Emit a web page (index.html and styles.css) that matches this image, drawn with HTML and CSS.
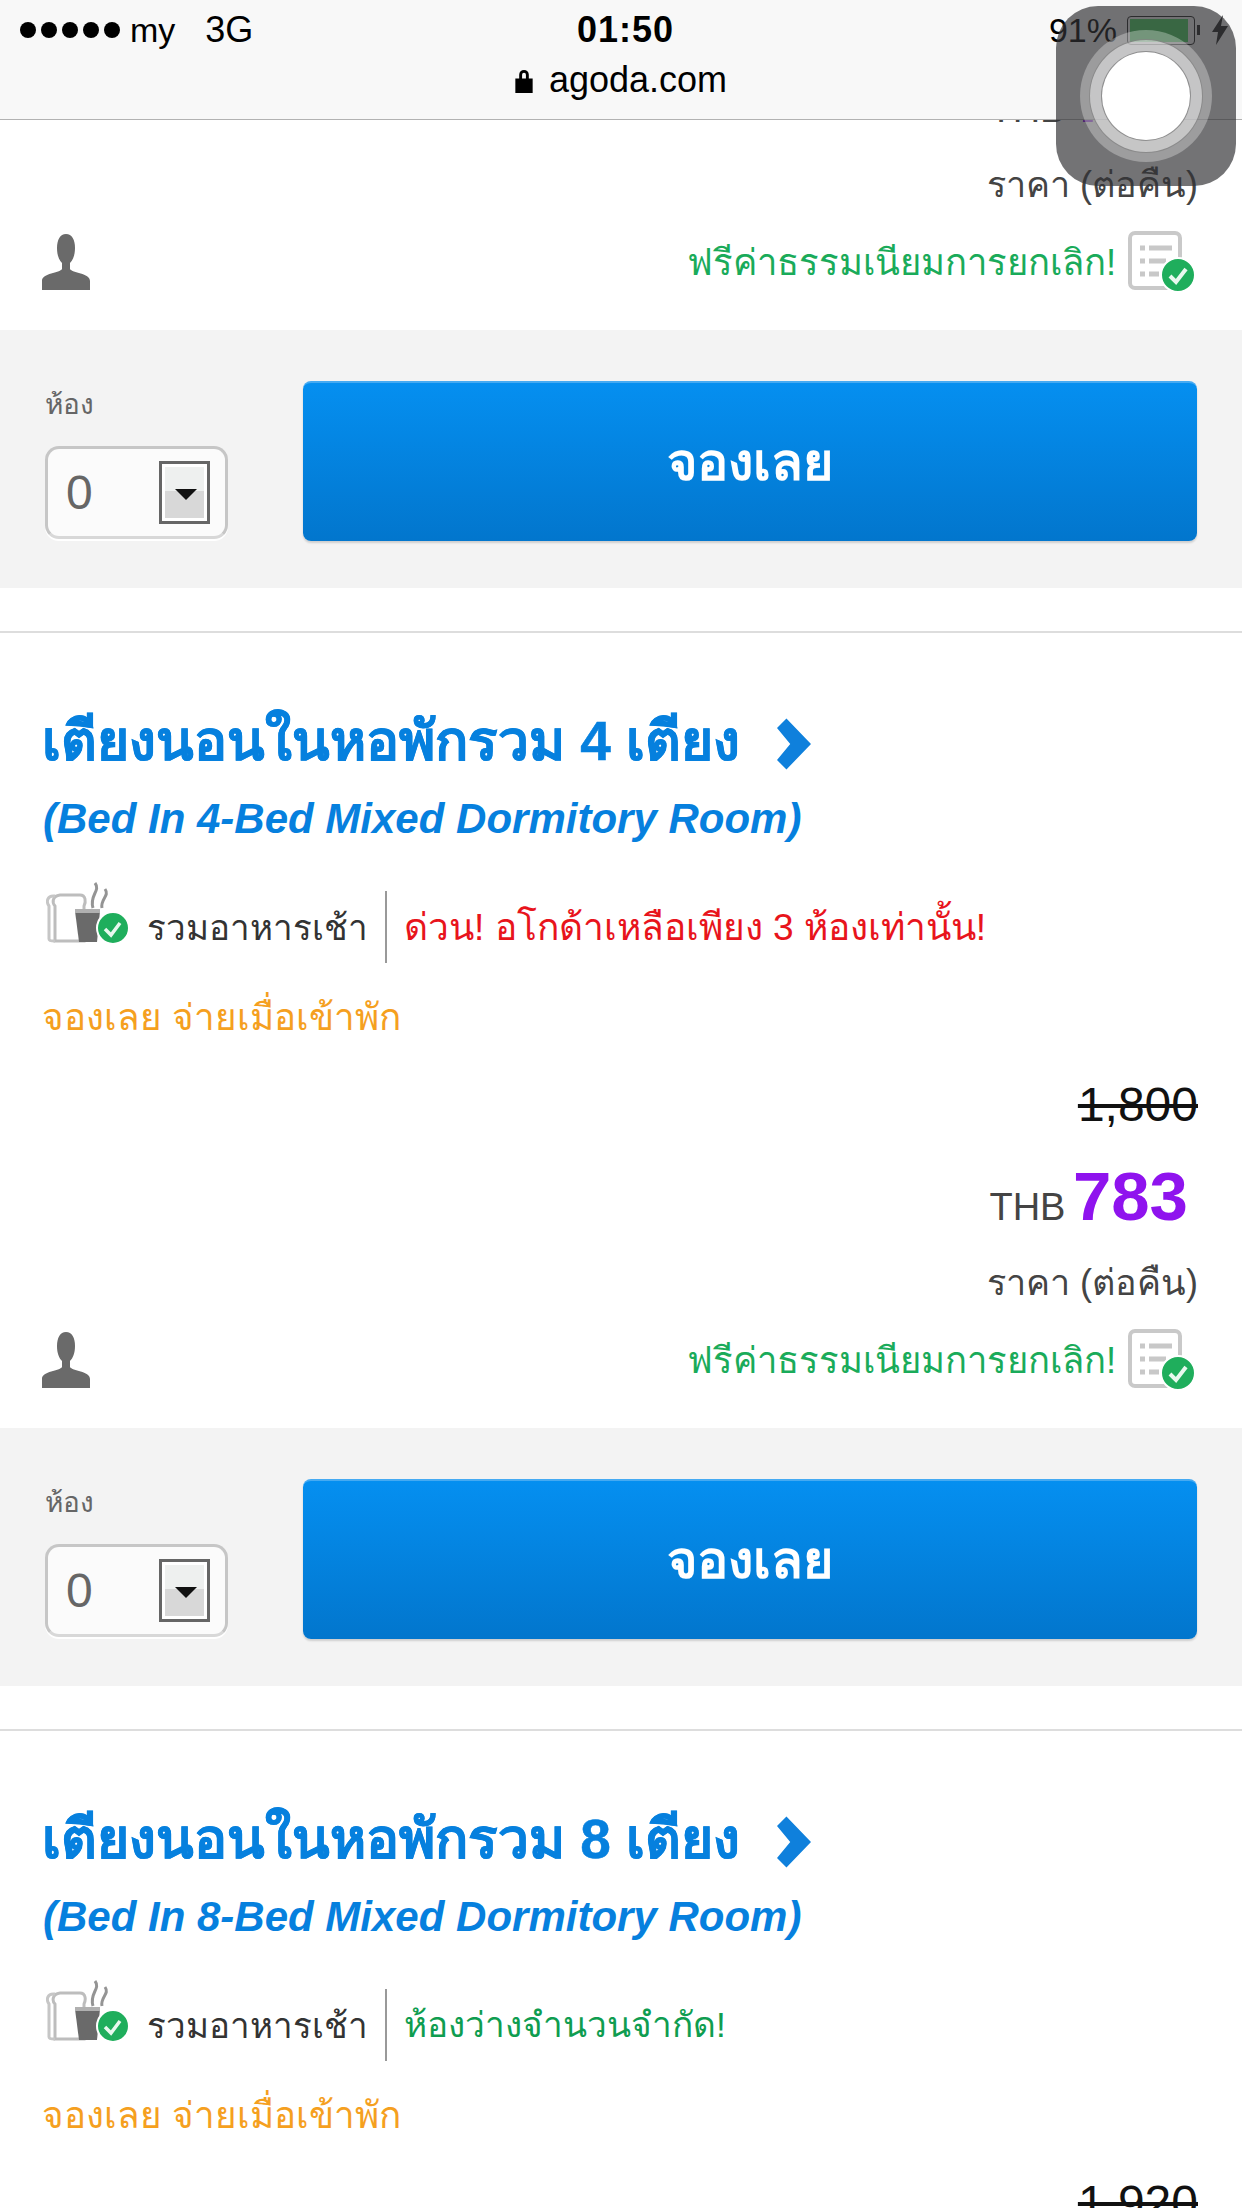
FILE: index.html
```html
<!DOCTYPE html>
<html lang="th">
<head>
<meta charset="utf-8">
<title>agoda.com</title>
<link rel="stylesheet" href="styles.css">
</head>
<body>
<svg class="defs" width="0" height="0" aria-hidden="true">
  <symbol id="i-person" viewBox="0 0 48 56">
    <path d="M24 0c6 0 9 6 9 14 0 7-2 12-5 15v6c2 4 20 4 20 12v9H0v-9c0-8 18-8 20-12v-6c-3-3-5-8-5-15C15 6 18 0 24 0z" fill="#6a6a6a"/>
  </symbol>
  <symbol id="i-policy" viewBox="0 0 68 62">
    <rect x="2" y="2" width="50" height="55" rx="5" fill="#fff" stroke="#c9c9c9" stroke-width="4"/>
    <path d="M12 17h5M21 17h23M12 30h5M21 30h17M12 43h5M21 43h10" stroke="#c8c8c8" stroke-width="5"/>
    <circle cx="50" cy="44" r="17" fill="#1fae5c" stroke="#fff" stroke-width="2"/>
    <path d="M42 45l6 6 10-13" fill="none" stroke="#e8f8ee" stroke-width="4"/>
  </symbol>
  <symbol id="i-breakfast" viewBox="0 0 84 66">
    <path d="M9 60V25c-3-3-3-10 5-11h20c6 0 6 7 4 11v35z" fill="#fff" stroke="#bdbdbd" stroke-width="3"/>
    <path d="M9 15c-8-1-9 6-6 10v33c0 2 3 2 6 2" fill="none" stroke="#c6c6c6" stroke-width="3"/>
    <path d="M49 2c6 8-6 12-2 25M59 8c5 7-5 10-3 19" fill="none" stroke="#949494" stroke-width="3"/>
    <path d="M29 30h25l-3 31H33z" fill="#6a6a6a"/>
    <path d="M29 28h25v4H29z" fill="#b0b0b0"/>
    <circle cx="67" cy="47" r="16" fill="#1fae5c" stroke="#fff" stroke-width="2"/>
    <path d="M59 48l6 6 9-12" fill="none" stroke="#e8f8ee" stroke-width="3.5"/>
  </symbol>
  <symbol id="i-chevron" viewBox="0 0 36 54">
    <path d="M0 10L10 0l26 27-26 27L0 44l14-17z" fill="#0f80dc"/>
  </symbol>
</svg>

<div class="page">
  <header class="safari">
    <div class="status">
      <div class="status-left">
        <span class="dots"><i></i><i></i><i></i><i></i><i></i></span>
        <span class="carrier">my</span>
        <span class="network">3G</span>
      </div>
      <div class="clock">01:50</div>
      <div class="status-right">
        <span>91%</span>
        <span class="battery"><span class="battery-fill"></span></span>
        <span class="battery-nub"></span>
        <svg class="bolt" viewBox="0 0 16 30"><path d="M11 0L0 17h6L4 30 16 11H9z" fill="#222"/></svg>
      </div>
    </div>
    <div class="address">
      <svg class="lock" viewBox="0 0 18 26"><path d="M4 11V7a5 5 0 0 1 10 0v4h4v15H0V11zm3 0h4V7a2 2 0 0 0-4 0z" fill="#000"/></svg>
      <span>agoda.com</span>
    </div>
  </header>

  <section class="card card-cut">
    <div class="price">
      <div class="price-now"><span class="cur">THB</span> <span class="amount">783</span></div>
      <div class="per">ราคา (ต่อคืน)</div>
    </div>
    <div class="policy-row">
      <svg class="person"><use href="#i-person"/></svg>
      <div class="policy"><span>ฟรีค่าธรรมเนียมการยกเลิก!</span><svg class="policy-icon"><use href="#i-policy"/></svg></div>
    </div>
    <div class="book">
      <div class="rooms">
        <div class="rooms-label">ห้อง</div>
        <div class="select"><span class="select-val">0</span><span class="select-arrow"></span></div>
      </div>
      <div class="btn">จองเลย</div>
    </div>
  </section>

  <section class="card">
    <h2 class="title">เตียงนอนในหอพักรวม 4 เตียง <svg class="chevron"><use href="#i-chevron"/></svg></h2>
    <div class="subtitle">(Bed In 4-Bed Mixed Dormitory Room)</div>
    <div class="meta">
      <svg class="breakfast"><use href="#i-breakfast"/></svg>
      <span class="meta-text">รวมอาหารเช้า</span>
      <span class="meta-note urgent">ด่วน! อโกด้าเหลือเพียง 3 ห้องเท่านั้น!</span>
    </div>
    <div class="pay">จองเลย จ่ายเมื่อเข้าพัก</div>
    <div class="price">
      <div class="price-old"><s>1,800</s></div>
      <div class="price-now"><span class="cur">THB</span> <span class="amount">783</span></div>
      <div class="per">ราคา (ต่อคืน)</div>
    </div>
    <div class="policy-row">
      <svg class="person"><use href="#i-person"/></svg>
      <div class="policy"><span>ฟรีค่าธรรมเนียมการยกเลิก!</span><svg class="policy-icon"><use href="#i-policy"/></svg></div>
    </div>
    <div class="book">
      <div class="rooms">
        <div class="rooms-label">ห้อง</div>
        <div class="select"><span class="select-val">0</span><span class="select-arrow"></span></div>
      </div>
      <div class="btn">จองเลย</div>
    </div>
  </section>

  <section class="card">
    <h2 class="title">เตียงนอนในหอพักรวม 8 เตียง <svg class="chevron"><use href="#i-chevron"/></svg></h2>
    <div class="subtitle">(Bed In 8-Bed Mixed Dormitory Room)</div>
    <div class="meta">
      <svg class="breakfast"><use href="#i-breakfast"/></svg>
      <span class="meta-text">รวมอาหารเช้า</span>
      <span class="meta-note limited">ห้องว่างจำนวนจำกัด!</span>
    </div>
    <div class="pay">จองเลย จ่ายเมื่อเข้าพัก</div>
    <div class="price">
      <div class="price-old"><s>1,920</s></div>
    </div>
  </section>

  <div class="assist"><div class="assist-outer"><div class="assist-mid"><div class="assist-core"></div></div></div></div>
</div>
</body>
</html>
```
FILE: styles.css
```css
* { box-sizing: border-box; }
html, body { margin: 0; padding: 0; background: #fff; }
body { font-family: "Liberation Sans", "Noto Sans", "DejaVu Sans", sans-serif; color: #333; }
.defs { position: absolute; }
.page { position: relative; width: 1242px; height: 2208px; overflow: hidden; background: #fff; }

/* Safari chrome */
.safari { position: relative; z-index: 2; height: 120px; background: #f8f8f8; border-bottom: 1px solid #b2b2b2; color: #000; }
.status { position: relative; display: flex; justify-content: space-between; align-items: center; height: 60px; padding: 0 14px 0 20px; font-size: 34px; }
.status-left { display: flex; align-items: center; }
.dots { display: flex; gap: 5px; }
.dots i { width: 16px; height: 16px; border-radius: 50%; background: #000; }
.carrier { margin-left: 10px; }
.network { margin-left: 30px; font-size: 36px; }
.clock { position: absolute; left: 577px; font-weight: 700; font-size: 36px; letter-spacing: 1px; }
.status-right { display: flex; align-items: center; }
.battery { width: 68px; height: 29px; margin-left: 10px; padding: 2px; border: 1px solid #222; border-radius: 4px; display: flex; }
.battery-fill { width: 58px; background: #4cd964; }
.battery-nub { width: 3px; height: 10px; margin-left: 2px; background: #222; }
.bolt { width: 16px; height: 30px; margin-left: 12px; }
.address { display: flex; justify-content: center; align-items: center; gap: 16px; height: 40px; font-size: 36px; }
.lock { width: 18px; height: 25px; }

/* Assistive touch */
.assist { position: absolute; z-index: 3; left: 1056px; top: 6px; width: 180px; height: 180px; border-radius: 42px; background: rgba(48, 48, 52, .68); display: flex; align-items: center; justify-content: center; }
.assist-outer { width: 132px; height: 132px; border-radius: 50%; background: rgba(255, 255, 255, .3); display: flex; align-items: center; justify-content: center; }
.assist-mid { width: 114px; height: 114px; border-radius: 50%; background: rgba(255, 255, 255, .42); border: 1px solid rgba(80, 80, 80, .5); display: flex; align-items: center; justify-content: center; }
.assist-core { width: 88px; height: 88px; border-radius: 50%; background: #fff; box-shadow: 0 0 0 1px rgba(90, 90, 90, .5); }

/* Cards */
.card { border-top: 2px solid #ddd; padding-top: 77px; margin-top: 43px; }
.card-cut { border-top: 0; padding-top: 0; margin-top: -87px; }
.title { display: flex; align-items: center; margin: 0; padding-left: 42px; height: 62px; font-size: 55px; font-weight: 700; -webkit-text-stroke: .5px #0680de; color: #0680de; line-height: 62px; white-space: pre; }
.chevron { width: 34px; height: 54px; margin-left: 22px; margin-top: 6px; filter: blur(.6px); }
.subtitle { margin-top: 22px; padding-left: 43px; font-size: 42px; line-height: 50px; font-weight: 700; font-style: italic; color: #0680de; }
.meta { display: flex; align-items: center; margin-top: 39px; padding-left: 46px; height: 88px; font-size: 35px; }
.breakfast { width: 84px; height: 66px; flex: none; margin-top: -26px; filter: blur(.5px); }
.meta-text { margin-left: 17px; color: #333; }
.meta-note { margin-left: 17px; padding-left: 17px; border-left: 2px solid #999; height: 72px; line-height: 72px; }
.urgent { color: #e8141c; font-size: 37.1px; }
.limited { color: #0f9d50; font-size: 35.2px; }
.pay { margin-top: 22px; padding-left: 42px; font-size: 36.8px; line-height: 50px; color: #f5a01f; }

.price { padding-right: 44px; text-align: right; }
.price-old { margin-top: 36px; font-size: 48px; line-height: 52px; color: #111; }
.price-now { margin-top: 26px; line-height: 80px; padding-right: 10px; }
.cur { font-size: 38px; color: #444; }
.amount { font-size: 69px; font-weight: 700; color: #8f13ee; margin-left: 3px; }
.per { margin-top: 3px; font-size: 36px; line-height: 50px; color: #444; }

.policy-row { display: flex; justify-content: space-between; align-items: center; height: 70px; padding: 0 46px 0 42px; margin-top: 17px; }
.person { width: 48px; height: 56px; filter: blur(.5px); }
.policy { display: flex; align-items: center; gap: 12px; font-size: 36.4px; color: #1aab5a; }
.policy-icon { width: 68px; height: 62px; filter: blur(.5px); }

.book { display: flex; align-items: center; gap: 75px; height: 258px; margin-top: 33px; padding: 0 45px; background: #f3f3f3; }
.rooms { width: 183px; flex: none; margin-top: 6px; }
.rooms-label { font-size: 28px; line-height: 40px; color: #666; margin-bottom: 21px; }
.select { display: flex; align-items: center; justify-content: space-between; height: 93px; padding: 0 15px 0 18px; background: #fbfbfb; border: 3px solid #c6c6c6; border-bottom-color: #d8d8d8; border-radius: 14px; box-shadow: 0 2px 0 #fff; }
.select-val { font-size: 48px; color: #666; }
.select-arrow { position: relative; width: 51px; height: 63px; border: 3px solid #666; background: linear-gradient(#eef0ef 0 47%, #d8d8d8 47% 100%); box-shadow: inset 0 0 0 3px #fff; }
.select-arrow::after { content: ""; position: absolute; left: 13px; top: 25px; border: 11px solid transparent; border-top-color: #111; border-bottom: 0; }
.btn { flex: 1; height: 160px; margin-top: 3px; display: flex; align-items: center; justify-content: center; border-radius: 8px; background: linear-gradient(#058ff0, #0276cd); border-top: 2px solid #45aaf2; box-shadow: 0 2px 2px rgba(0, 0, 0, .15); color: #fff; font-size: 52px; font-weight: 700; }
```
